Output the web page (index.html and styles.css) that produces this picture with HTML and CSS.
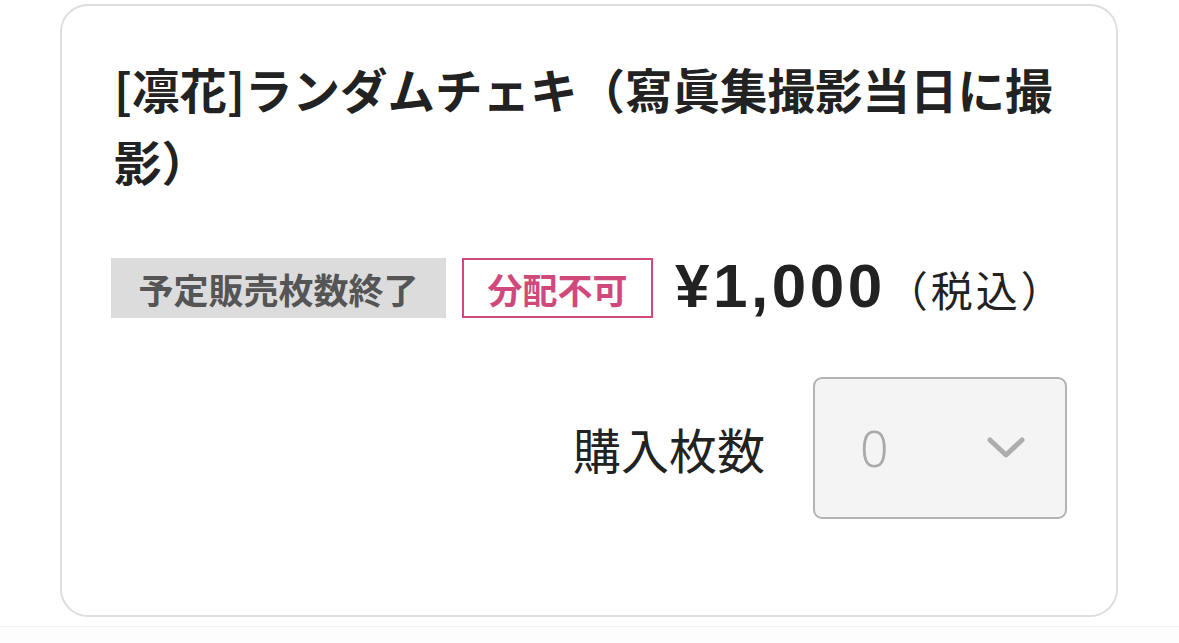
FILE: index.html
```html
<!DOCTYPE html>
<html lang="ja">
<head>
<meta charset="utf-8">
<link rel="stylesheet" href="styles.css">
</head>
<body>
<div class="page">
  <div class="card">
    <h2 class="title">[凛花]ランダムチェキ（寫眞集撮影当日に撮影）</h2>
    <div class="price-row">
      <span class="badge badge-gray">予定販売枚数終了</span>
      <span class="badge badge-pink">分配不可</span>
      <span class="price">¥1,000</span>
      <span class="tax">（税込）</span>
    </div>
    <div class="qty-row">
      <span class="qty-label">購入枚数</span>
      <div class="select">
        <span class="select-value">0</span>
        <svg class="chevron" width="38" height="24" viewBox="0 0 38 24"><polyline points="3,4 19,19 35,4" fill="none" stroke="#adadad" stroke-width="5" stroke-linecap="round" stroke-linejoin="round"/></svg>
      </div>
    </div>
  </div>
  <div class="bottom-strip"></div>
</div>
</body>
</html>
```

FILE: styles.css
```css
* { box-sizing: border-box; }
html, body { margin: 0; padding: 0; background: #fff; }
body {
  font-family: "Noto Sans CJK JP", "Noto Sans", sans-serif;
  color: #222;
  width: 1179px;
  height: 643px;
  overflow: hidden;
}
.page {
  padding-top: 4px;
  padding-left: 60px;
}
.card {
  width: 1058px;
  height: 613px;
  border: 2px solid #dedede;
  border-radius: 28px;
  padding: 47px 49px 0 49px;
  display: flex;
  flex-direction: column;
}
.title {
  margin: 0;
  font-size: 47.5px;
  line-height: 72px;
  font-weight: 700;
  color: #222;
  padding-left: 3px;
}
.price-row {
  margin-top: 61px;
  display: flex;
  align-items: center;
  height: 60px;
}
.badge {
  height: 60px;
  display: flex;
  align-items: center;
  font-size: 35px;
  font-weight: 700;
}
.badge-gray {
  background: #dcdcdc;
  color: #555;
  width: 335px;
  justify-content: center;
}
.badge-pink {
  margin-left: 16px;
  width: 191px;
  border: 2px solid #d0497c;
  color: #d0497c;
  justify-content: center;
}
.price {
  margin-left: 22px;
  margin-bottom: 4px;
  font-family: "Liberation Sans", "Noto Sans CJK JP", sans-serif;
  font-size: 62px;
  font-weight: 700;
  letter-spacing: 3.5px;
  color: #222;
  line-height: 60px;
}
.tax {
  margin-left: 0;
  font-size: 42px;
  letter-spacing: 3px;
  color: #222;
}
.qty-row {
  margin-top: 59px;
  display: flex;
  justify-content: flex-end;
  align-items: center;
  gap: 48px;
}
.qty-label {
  font-size: 48px;
  color: #222;
  font-weight: 400;
}
.select {
  width: 254px;
  height: 142px;
  border: 2px solid #b3b3b3;
  border-radius: 9px;
  background: #f4f4f4;
  display: flex;
  align-items: center;
  padding-left: 45px;
  padding-right: 40px;
  justify-content: space-between;
}
.select-value {
  font-size: 50px;
  color: #aaa;
  font-family: "Noto Sans", sans-serif;
  font-weight: 300;
}
.chevron { display: block; }
.bottom-strip {
  margin-left: -60px;
  margin-top: 9px;
  height: 20px;
  border-top: 1px solid #f2f2f2;
  background: #fdfdfd;
}
```
